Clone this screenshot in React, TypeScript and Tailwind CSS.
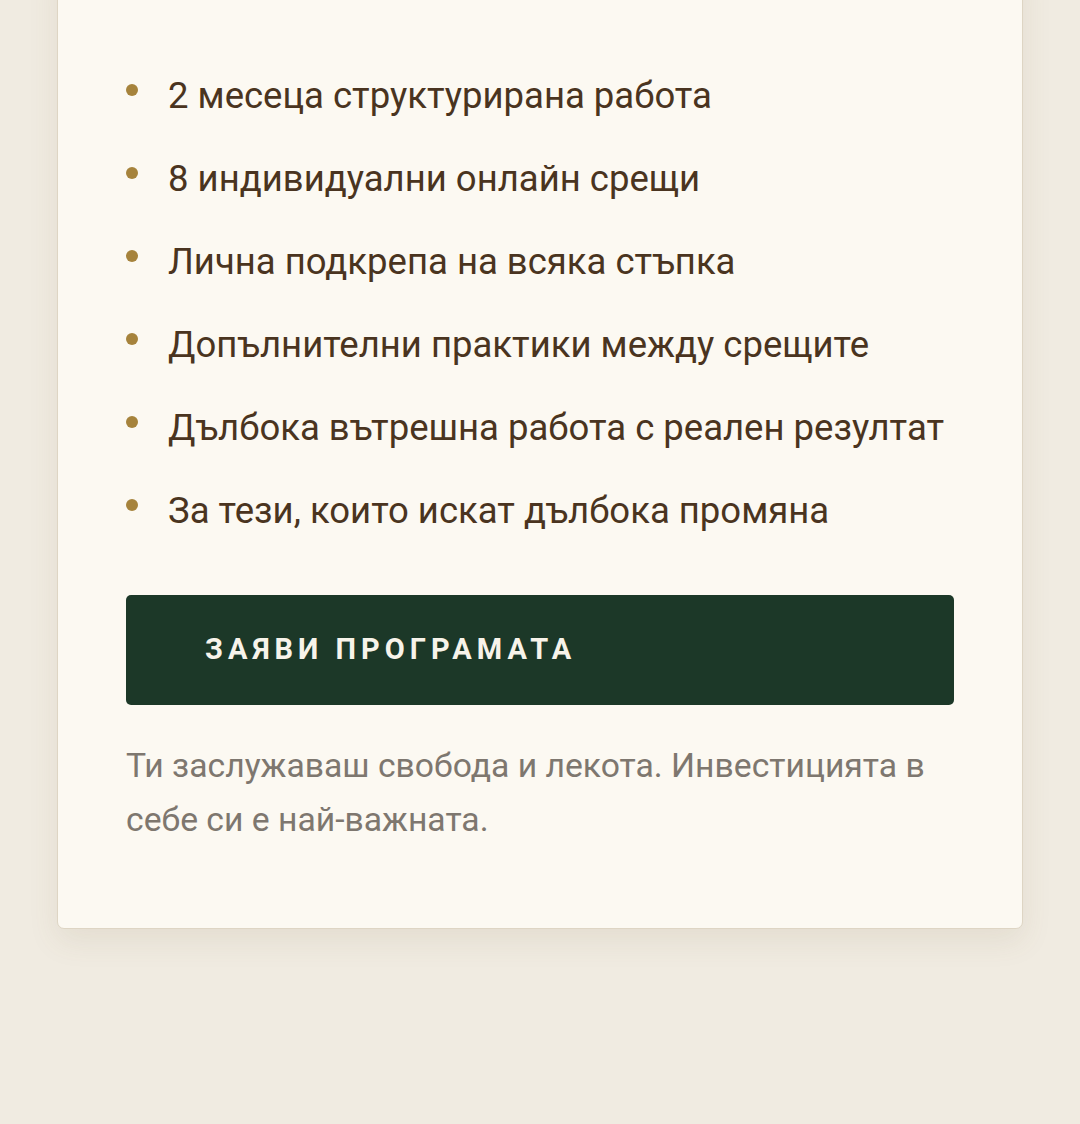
import React from "react";

const items = [
  "2 месеца структурирана работа",
  "8 индивидуални онлайн срещи",
  "Лична подкрепа на всяка стъпка",
  "Допълнителни практики между срещите",
  "Дълбока вътрешна работа с реален резултат",
  "За тези, които искат дълбока промяна",
];

export default function App() {
  return (
    <div
      className="min-h-[1124px] w-[1080px] bg-[#f0ebe1] px-[57px] overflow-hidden"
      style={{ fontFamily: "Roboto, 'Noto Sans', sans-serif" }}
    >
      <div className="-mt-[40px] rounded-[7px] border-[1.5px] border-[#ded5c4] bg-[#fcf9f2] px-[68px] pt-[108px] pb-[81px] shadow-[0_12px_30px_rgba(120,100,60,0.10)]">
        <ul className="flex flex-col gap-[30px]">
          {items.map((t) => (
            <li key={t} className="flex items-start gap-[30px] text-[36.5px] leading-[53px] text-[#4a3420]">
              <span className="mt-[15px] h-[12px] w-[12px] shrink-0 rounded-full bg-[#a6833c]" />
              <span>{t}</span>
            </li>
          ))}
        </ul>
        <button className="mt-[58px] flex h-[110px] w-full items-center rounded-[5px] bg-[#1c3828] pl-[79px] text-[29px] font-bold tracking-[5px] text-[#f7f3ea]">
          ЗАЯВИ ПРОГРАМАТА
        </button>
        <p className="mt-[34px] text-[33.7px] leading-[54px] text-[#7e776f]">
          Ти заслужаваш свобода и лекота. Инвестицията в себе си е най-важната.
        </p>
      </div>
    </div>
  );
}
